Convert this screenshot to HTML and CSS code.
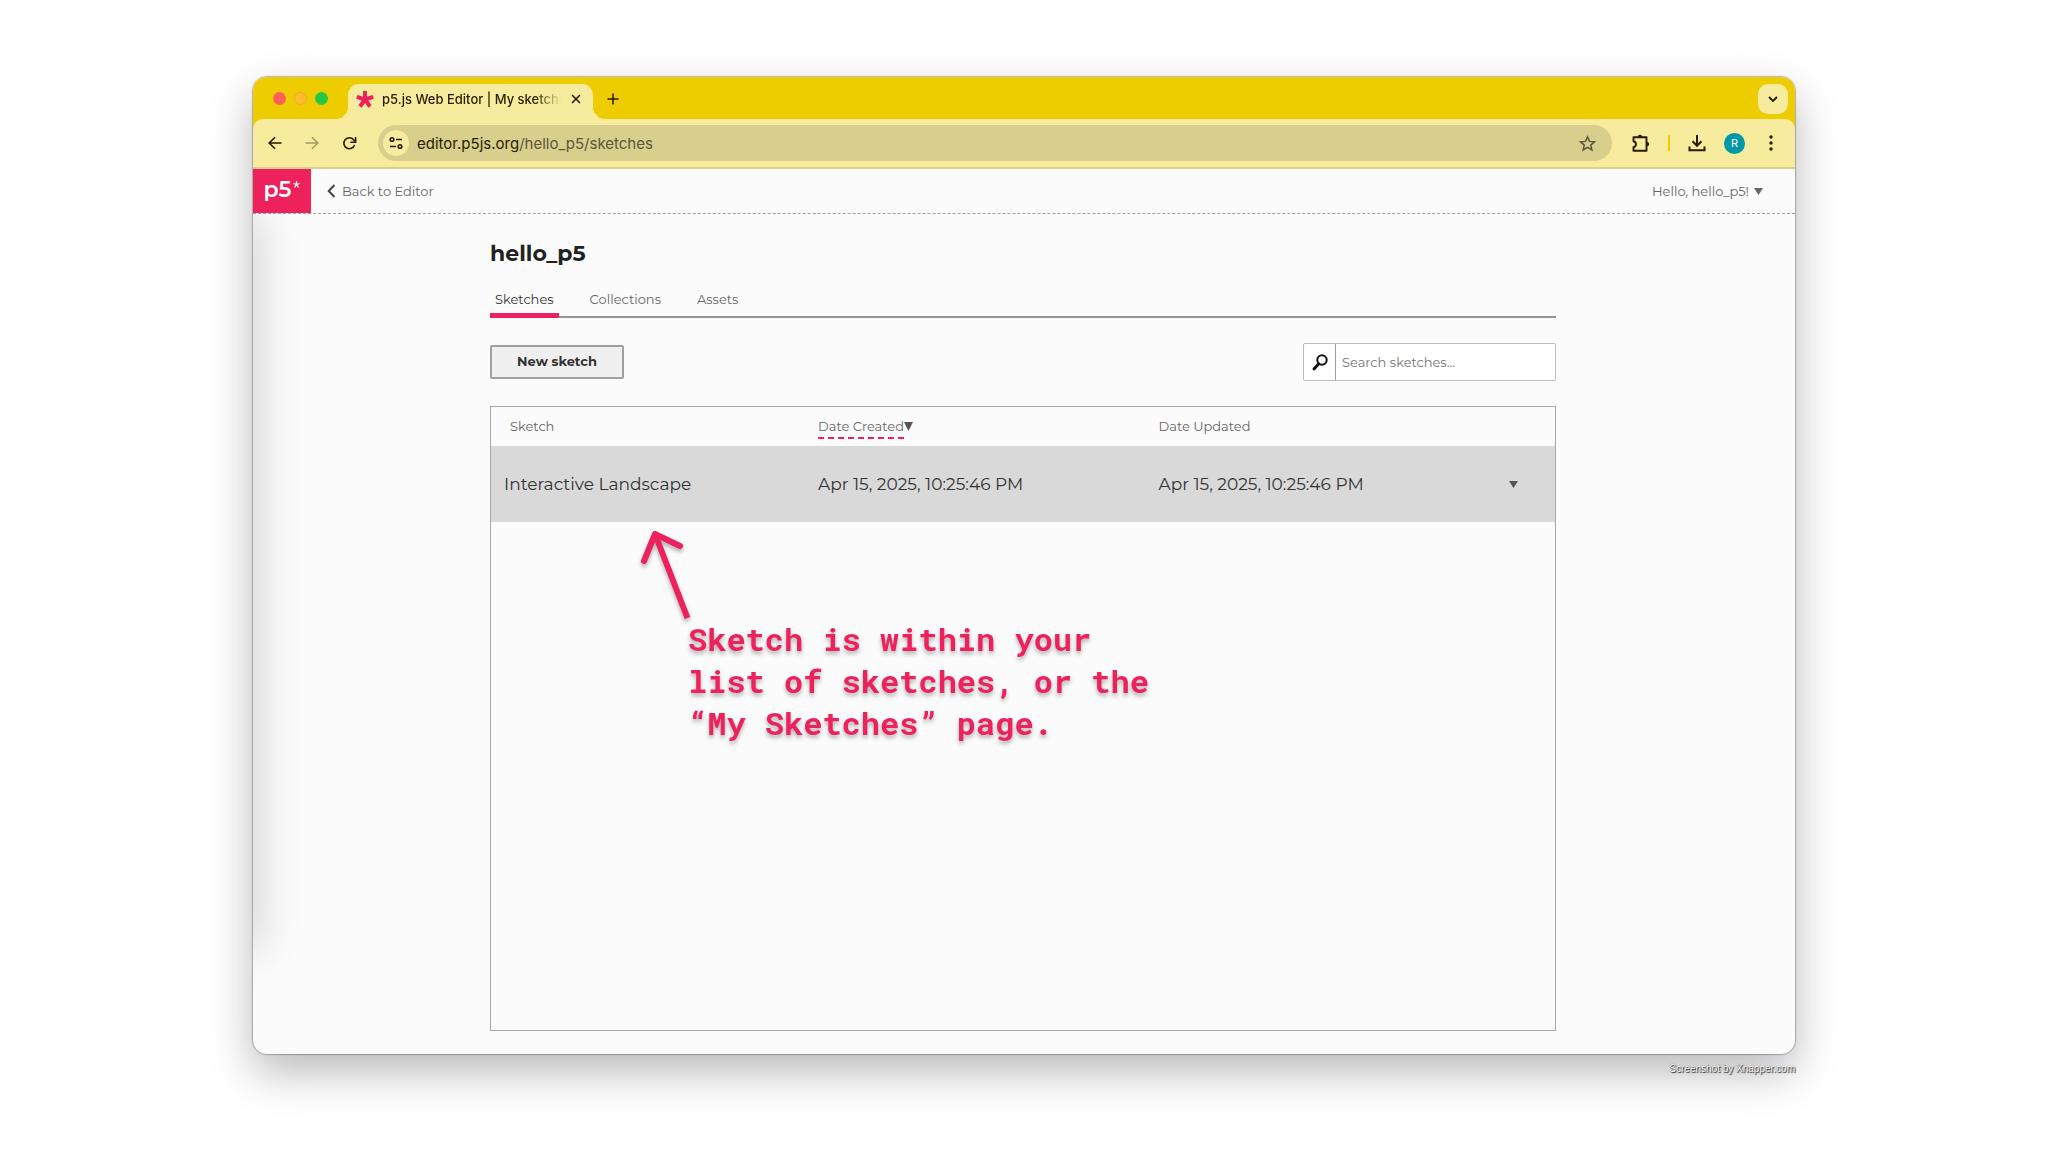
FILE: index.html
```html
<!DOCTYPE html>
<html lang="en">
<head>
<meta charset="utf-8">
<title>p5.js Web Editor | My sketches</title>
<link rel="stylesheet" href="styles.css">
</head>
<body>
<div class="window">
  <div class="tabstrip">
    <div class="lights"><span class="light red"></span><span class="light amber"></span><span class="light green"></span></div>
    <div class="tab">
      <svg class="favicon" width="18" height="18" viewBox="0 0 18 18"><g stroke="#ed225d" stroke-width="4"><path d="M9 10V1M9 9.500L.8 6.800M9 9.500l8.200-2.700M9 9.500l-5 7M9 9.500l5 7"/></g></svg>
      <span class="tab-title">p5.js Web Editor | My sketches</span>
      <button class="icon-btn" aria-label="Close tab"><svg width="10" height="10" viewBox="0 0 10 10"><path d="M1 1l8 8M9 1l-8 8" stroke="#251d00" stroke-width="1.600"/></svg></button>
    </div>
    <button class="icon-btn new-tab" aria-label="New tab"><svg width="12" height="12" viewBox="0 0 12 12"><path d="M6 .5v11M.5 6h11" stroke="#251d00" stroke-width="1.600"/></svg></button>
    <button class="icon-btn tab-search" aria-label="Search tabs"><svg width="10" height="7" viewBox="0 0 10 7"><path d="M1 1l4 4 4-4" fill="none" stroke="#251d00" stroke-width="1.900"/></svg></button>
  </div>

  <div class="toolbar">
    <div class="nav">
      <button class="icon-btn" aria-label="Back"><svg width="14" height="14" viewBox="0 0 14 14"><path d="M13.500 7H1.500M7 1.200L1.200 7 7 12.800" fill="none" stroke="#251d00" stroke-width="1.600"/></svg></button>
      <button class="icon-btn" aria-label="Forward"><svg width="14" height="14" viewBox="0 0 14 14"><path d="M.5 7h12M7 1.200L12.800 7 7 12.800" fill="none" stroke="#a59c63" stroke-width="1.600"/></svg></button>
      <button class="icon-btn" aria-label="Reload"><svg width="15" height="15" viewBox="0 0 15 15"><path d="M12.600 9A5.500 5.500 0 1 1 11.600 3.700L13 5.300" fill="none" stroke="#251d00" stroke-width="1.600"/><path d="M13.600 1v5.200H8.400" fill="none" stroke="#251d00" stroke-width="1.600"/></svg></button>
    </div>
    <div class="address">
      <button class="icon-btn site-info" aria-label="Site information"><svg width="14" height="14" viewBox="0 0 14 14" fill="none" stroke="#251d00" stroke-width="1.600"><circle cx="3" cy="3.500" r="1.800"/><path d="M7 3.500h6M1 10.500h6"/><circle cx="11" cy="10.500" r="1.800"/></svg></button>
      <span class="url">editor.p5js.org<span class="path">/hello_p5/sketches</span></span>
      <button class="icon-btn" aria-label="Bookmark"><svg width="17" height="17" viewBox="0 0 17 17"><path d="M8.500 1.800l2 4.600 5 .4-3.800 3.300 1.200 4.900-4.400-2.600L4.100 15l1.200-4.900L1.500 6.800l5-.4z" fill="none" stroke="#5a573f" stroke-width="1.500"/></svg></button>
    </div>
    <div class="tools">
      <button class="icon-btn" aria-label="Extensions"><svg width="19" height="19" viewBox="0 0 19 19"><path d="M2.500 3.300h13v13.500h-13v-3.600c3.300-.7 3.300-5.200 0-5.900z" fill="none" stroke="#251d00" stroke-width="1.900" stroke-linejoin="round"/><path d="M6.800 3a2.200 2.200 0 0 1 4.400 0zM16 7.900a2.200 2.200 0 0 1 0 4.400z" fill="#251d00"/></svg></button>
      <span class="divider"></span>
      <button class="icon-btn" aria-label="Downloads"><svg width="18" height="18" viewBox="0 0 18 18"><path d="M9 1v10.500M4.500 7.300L9 11.800l4.500-4.500M1.500 12.500v3.700h15v-3.700" fill="none" stroke="#251d00" stroke-width="2"/></svg></button>
      <button class="avatar" aria-label="Profile">R</button>
      <button class="icon-btn" aria-label="Menu"><svg width="4" height="16" viewBox="0 0 4 16" fill="#251d00"><circle cx="2" cy="2" r="1.700"/><circle cx="2" cy="8" r="1.700"/><circle cx="2" cy="14" r="1.700"/></svg></button>
    </div>
  </div>

  <header class="site-header">
    <a class="logo" href="#" aria-label="p5.js home">p5<svg width="7" height="7" viewBox="0 0 7 7"><path d="M3.500 3.800V.3M3.500 3.500L.3 2.500M3.500 3.500l3.200-1M3.500 3.500l-2 3M3.500 3.500l2 3" stroke="#fff" stroke-width="1.300"/></svg></a>
    <a class="back" href="#"><svg width="9" height="14" viewBox="0 0 9 14"><path d="M7.500 1L1.700 7l5.800 6" fill="none" stroke="#444" stroke-width="2"/></svg>Back to Editor</a>
    <button class="account">Hello, hello_p5!<svg width="9" height="7" viewBox="0 0 9 7"><path d="M0 0h9L4.500 7z" fill="#666"/></svg></button>
  </header>

  <main class="page">
    <div class="content">
      <h1>hello_p5</h1>
      <nav class="tabs">
        <a class="current" href="#">Sketches</a>
        <a href="#">Collections</a>
        <a href="#">Assets</a>
      </nav>
      <div class="actions">
        <button class="new-sketch">New sketch</button>
        <label class="search">
          <span class="search-icon"><svg width="16" height="17" viewBox="0 0 16 17"><circle cx="10" cy="6" r="4.700" fill="none" stroke="#111" stroke-width="2"/><path d="M6.700 9.800L2 15" stroke="#111" stroke-width="3" stroke-linecap="round"/></svg></span>
          <input type="text" placeholder="Search sketches..." aria-label="Search sketches">
        </label>
      </div>
      <section class="panel">
        <table>
          <colgroup><col class="c-name"><col class="c-date"><col class="c-date"><col></colgroup>
          <thead>
            <tr><th>Sketch</th><th><span class="sorted">Date Created</span><svg width="9" height="9" viewBox="0 0 9 9"><path d="M0 0h9L4.500 9z" fill="#555"/></svg></th><th>Date Updated</th><th></th></tr>
          </thead>
          <tbody>
            <tr><td><a href="#">Interactive Landscape</a></td><td>Apr 15, 2025, 10:25:46 PM</td><td>Apr 15, 2025, 10:25:46 PM</td><td><button class="icon-btn row-menu" aria-label="Sketch options"><svg width="9" height="7" viewBox="0 0 9 7"><path d="M0 0h9L4.500 7z" fill="#555"/></svg></button></td></tr>
          </tbody>
        </table>
        <div class="note">
          <svg class="arrow" width="56" height="92" viewBox="0 0 56 92" fill="none" stroke="#ed225d" stroke-width="6"><path d="M47.500 92L15 8"/><path d="M4 35L15 8l25 12" stroke-linecap="round" stroke-linejoin="round"/></svg>
          <p>Sketch is within your<br>list of sketches, or the<br>“My Sketches” page.</p>
        </div>
      </section>
    </div>
  </main>
</div>
<p class="credit">Screenshot by Xnapper.com</p>
</body>
</html>
```
FILE: styles.css
```css
* { box-sizing: border-box; }

body {
  margin: 0;
  min-height: 100vh;
  padding: 77px 253px 0;
  background: #fff;
  color: #333;
  font-family: Montserrat, Inter, "Open Sans", sans-serif;
  font-size: 13px;
}

button, input { font: inherit; color: inherit; }
a { color: inherit; text-decoration: none; }
svg { display: block; flex: none; overflow: visible; }

.icon-btn {
  display: flex;
  align-items: center;
  justify-content: center;
  padding: 0;
  border: 0;
  background: none;
}

.window {
  display: flex;
  flex-direction: column;
  min-height: calc(100vh - 175px);
  overflow: hidden;
  border-radius: 14px;
  background: #fbfbfb;
  box-shadow: 0 0 1px 1px rgba(0, 0, 0, .25), 0 18px 44px rgba(0, 0, 0, .28);
}

/* Browser chrome */
.tabstrip, .toolbar { font-family: Inter, sans-serif; }

.tabstrip {
  position: relative;
  z-index: 1;
  display: flex;
  height: 42px;
  padding: 7px 7px 0 20px;
  background: #eecd00;
}

.lights { display: flex; gap: 8px; width: 75px; padding-top: 8px; }
.light { width: 13px; height: 13px; border-radius: 50%; }
.red { background: #ff5f57; }
.amber { background: #febc2e; box-shadow: inset 0 0 0 1px #f0ab26; }
.green { background: #28c840; }

.tab {
  position: relative;
  display: flex;
  align-items: center;
  width: 245px;
  height: 35px;
  padding: 0 12px 6px 8px;
  border-radius: 11px 11px 0 0;
  background: #f7eb9d;
}

/* Concave feet joining the active tab to the toolbar */
.tab::before, .tab::after {
  content: "";
  position: absolute;
  bottom: 0;
  width: 12px;
  height: 12px;
}
.tab::before { right: 100%; background: radial-gradient(circle at 0 0, transparent 12px, #f7eb9d 12px); }
.tab::after { left: 100%; background: radial-gradient(circle at 100% 0, transparent 12px, #f7eb9d 12px); }

.tab-title {
  flex: 1;
  margin: 0 10px 0 8px;
  overflow: hidden;
  white-space: nowrap;
  color: #251d00;
  font-size: 13px;
  font-weight: 500;
  mask-image: linear-gradient(to right, #000 85%, transparent);
}

.new-tab { width: 40px; height: 30px; }

.tab-search {
  width: 30px;
  height: 30px;
  margin-left: auto;
  border-radius: 10px;
  background: #f7eb9d;
}

.toolbar {
  display: flex;
  align-items: center;
  height: 50px;
  padding: 0 22px 0 15px;
  border-bottom: 2px solid #d8cf8c;
  border-radius: 10px 10px 0 0;
  background: #f7eb9d;
  box-shadow: 0 -12px 0 #eecd00;
}

.nav { display: flex; gap: 23px; width: 110px; }

.address {
  display: flex;
  flex: 1;
  align-items: center;
  height: 36px;
  padding: 0 16px 0 5px;
  border-radius: 18px;
  background: #d8cf8c;
}

.site-info { width: 26px; height: 26px; border-radius: 50%; background: #f7eb9d; }
.url { flex: 1; margin-left: 8px; color: #251d00; font-size: 15px; }
.path { color: #5a573f; }

.tools { display: flex; align-items: center; gap: 18px; margin-left: 19px; }
.divider { width: 2px; height: 16px; background: #eecd00; }

.avatar {
  width: 21px;
  height: 21px;
  margin-right: 6px;
  padding: 0;
  border: 0;
  border-radius: 50%;
  background: #0097a7;
  color: #fff;
  font-size: 11px;
}

/* Editor header */
.site-header {
  display: flex;
  align-items: center;
  height: 45px;
  padding-right: 32px;
  border-bottom: 1px dashed #a0a0a0;
  color: #666;
}

.logo {
  display: flex;
  justify-content: center;
  width: 58px;
  height: 44px;
  padding-top: 8px;
  background: #ed225d;
  color: #fff;
  font-size: 22px;
  line-height: 26px;
  font-weight: 600;
}

.logo svg { margin: 4px 0 0 2px; }
.back { display: flex; align-items: center; gap: 6px; margin-left: 16px; }

.account {
  display: flex;
  align-items: center;
  gap: 5px;
  margin-left: auto;
  padding: 0;
  border: 0;
  background: none;
}

/* Dashboard */
.page {
  position: relative;
  display: flex;
  flex: 1;
  flex-direction: column;
  overflow: hidden;
  padding: 0 34px 23px 32px;
}

/* Soft shade along the left edge */
.page::before {
  content: "";
  position: absolute;
  top: 0;
  left: -20px;
  width: 20px;
  height: 735px;
  box-shadow: 0 0 44px rgba(0, 0, 0, .28);
}

.content {
  display: flex;
  flex: 1;
  flex-direction: column;
  width: 100%;
  max-width: 1066px;
  margin: 0 auto;
}

h1 {
  margin: 26px 0 16px;
  color: #222;
  font-size: 22px;
  line-height: 28px;
  font-weight: 700;
}

.tabs {
  display: flex;
  gap: 26px;
  height: 34px;
  border-bottom: 2px solid #949494;
  color: #666;
}

.tabs a { height: 34px; padding: 6px 5px 0; line-height: 18px; }
.tabs .current { color: #333; border-bottom: 5px solid #ed225d; }

.actions {
  display: flex;
  align-items: center;
  justify-content: space-between;
  margin: 25px 0;
}

.new-sketch {
  width: 134px;
  height: 34px;
  padding: 0 0 2px;
  border: 2px solid #a0a0a0;
  border-radius: 2px;
  background: #f0f0f0;
  font-weight: 700;
}

.search {
  display: flex;
  width: 253px;
  height: 38px;
  border: 1px solid #bdbdbd;
  border-radius: 2px;
  background: #fff;
}

.search-icon {
  display: flex;
  align-items: center;
  justify-content: center;
  width: 32px;
  border-right: 1px solid #a0a0a0;
}

.search input {
  flex: 1;
  min-width: 0;
  padding: 0 6px;
  border: 0;
  background: none;
}
.search input::placeholder { color: #757575; opacity: 1; }

.panel {
  position: relative;
  flex: 1;
  border: 1px solid #a8a8a8;
}

table { width: 100%; table-layout: fixed; border-collapse: collapse; text-align: left; }
.c-name { width: 327px; }
.c-date { width: 32%; }

th { height: 39px; padding: 0 0 1px; color: #666; font-weight: 400; }
th:first-child { padding-left: 19px; }
th svg { display: inline-block; }
.sorted { padding-bottom: 3px; border-bottom: 2px dashed #ed225d; }

td { height: 76px; padding: 0; background: #d9d9d9; font-size: 17px; }
td:first-child { padding-left: 13px; }
.row-menu { width: 30px; height: 40px; }

/* Callout over the listing */
.note {
  position: absolute;
  top: 119px;
  left: 149px;
  color: #ed225d;
  filter: drop-shadow(0 3px 2px rgba(0, 0, 0, .3));
}

.note p {
  margin: 0 0 0 48px;
  font-family: "Roboto Mono", "Liberation Mono", monospace;
  font-size: 32px;
  line-height: 42px;
  font-weight: 700;
  white-space: nowrap;
}

.credit {
  margin: 8px 0 0;
  color: #fff;
  font-family: "Liberation Sans", sans-serif;
  font-size: 10px;
  line-height: 13px;
  text-align: right;
  text-shadow: 1px 1px 1px #222, 0 0 1px #555;
}
```
